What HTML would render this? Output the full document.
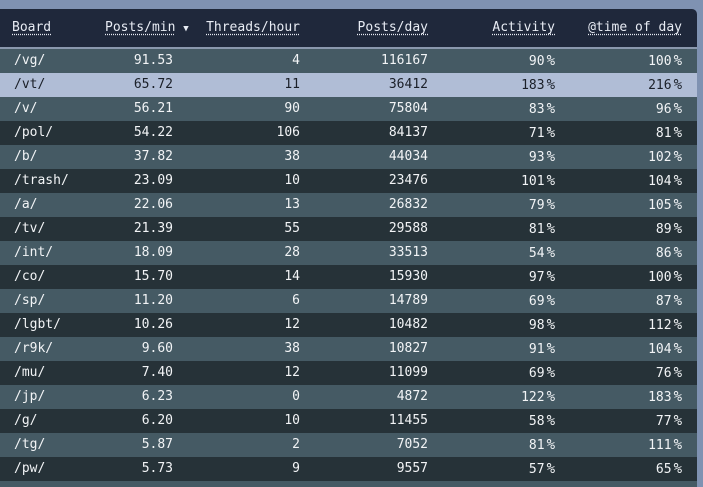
<!DOCTYPE html>
<html><head><style>
html,body{margin:0;padding:0;width:703px;height:487px;overflow:hidden;}
body{background:#7f92b2;position:relative;font-family:"DejaVu Sans Mono","Liberation Mono",monospace;font-size:13px;}
.t{position:absolute;left:0;top:9px;width:697px;}
.h{height:38px;background:#1f283b;border-top-right-radius:5px;position:relative;color:#e8ecf4;}
.sep{height:2px;background:#8a98ad;}
.r{height:24px;position:relative;color:#f2f4f6;}
.g{background:#455a64;}
.d{background:#263238;}
.hl{background:#b0bdd6;color:#1a1f28;}
.c{position:absolute;top:0;line-height:24px;white-space:pre;}
.h .c{line-height:38px;}
.u{text-decoration:underline dotted;text-underline-offset:3px;}
.b{left:14px}
.c1{right:524px}.c2{right:397px}.c3{right:269px}.c4{right:142px}.c5{right:15px}
.p{margin-left:2px;font-size:14px}
</style></head><body>
<div class="t">
<div class="h">
<span class="c u" style="left:12px">Board</span>
<span class="c" style="left:105px"><span class="u">Posts/min</span> <span style="font-size:9px">▼</span></span>
<span class="c u" style="right:397px">Threads/hour</span>
<span class="c u" style="right:269px">Posts/day</span>
<span class="c u" style="right:142px">Activity</span>
<span class="c u" style="right:15px">@time of day</span>
</div>
<div class="sep"></div>
<div id="rows"></div>
</div>
<script>
var d=[["/vg/","91.53","4","116167","90","100"],["/vt/","65.72","11","36412","183","216"],["/v/","56.21","90","75804","83","96"],["/pol/","54.22","106","84137","71","81"],["/b/","37.82","38","44034","93","102"],["/trash/","23.09","10","23476","101","104"],["/a/","22.06","13","26832","79","105"],["/tv/","21.39","55","29588","81","89"],["/int/","18.09","28","33513","54","86"],["/co/","15.70","14","15930","97","100"],["/sp/","11.20","6","14789","69","87"],["/lgbt/","10.26","12","10482","98","112"],["/r9k/","9.60","38","10827","91","104"],["/mu/","7.40","12","11099","69","76"],["/jp/","6.23","0","4872","122","183"],["/g/","6.20","10","11455","58","77"],["/tg/","5.87","2","7052","81","111"],["/pw/","5.73","9","9557","57","65"]];
var h="";d.forEach(function(x,i){var cls=i==1?"hl":(i%2==0?"g":"d");
var pc=function(v){return v+'<span class="p">%</span>'};
h+='<div class="r '+cls+'"><span class="c b">'+x[0]+'</span><span class="c c1">'+x[1]+'</span><span class="c c2">'+x[2]+'</span><span class="c c3">'+x[3]+'</span><span class="c c4">'+pc(x[4])+'</span><span class="c c5">'+pc(x[5])+'</span></div>';});
h+='<div class="r g" style="height:6px"></div>';
document.getElementById("rows").innerHTML=h;
</script>
</body></html>
